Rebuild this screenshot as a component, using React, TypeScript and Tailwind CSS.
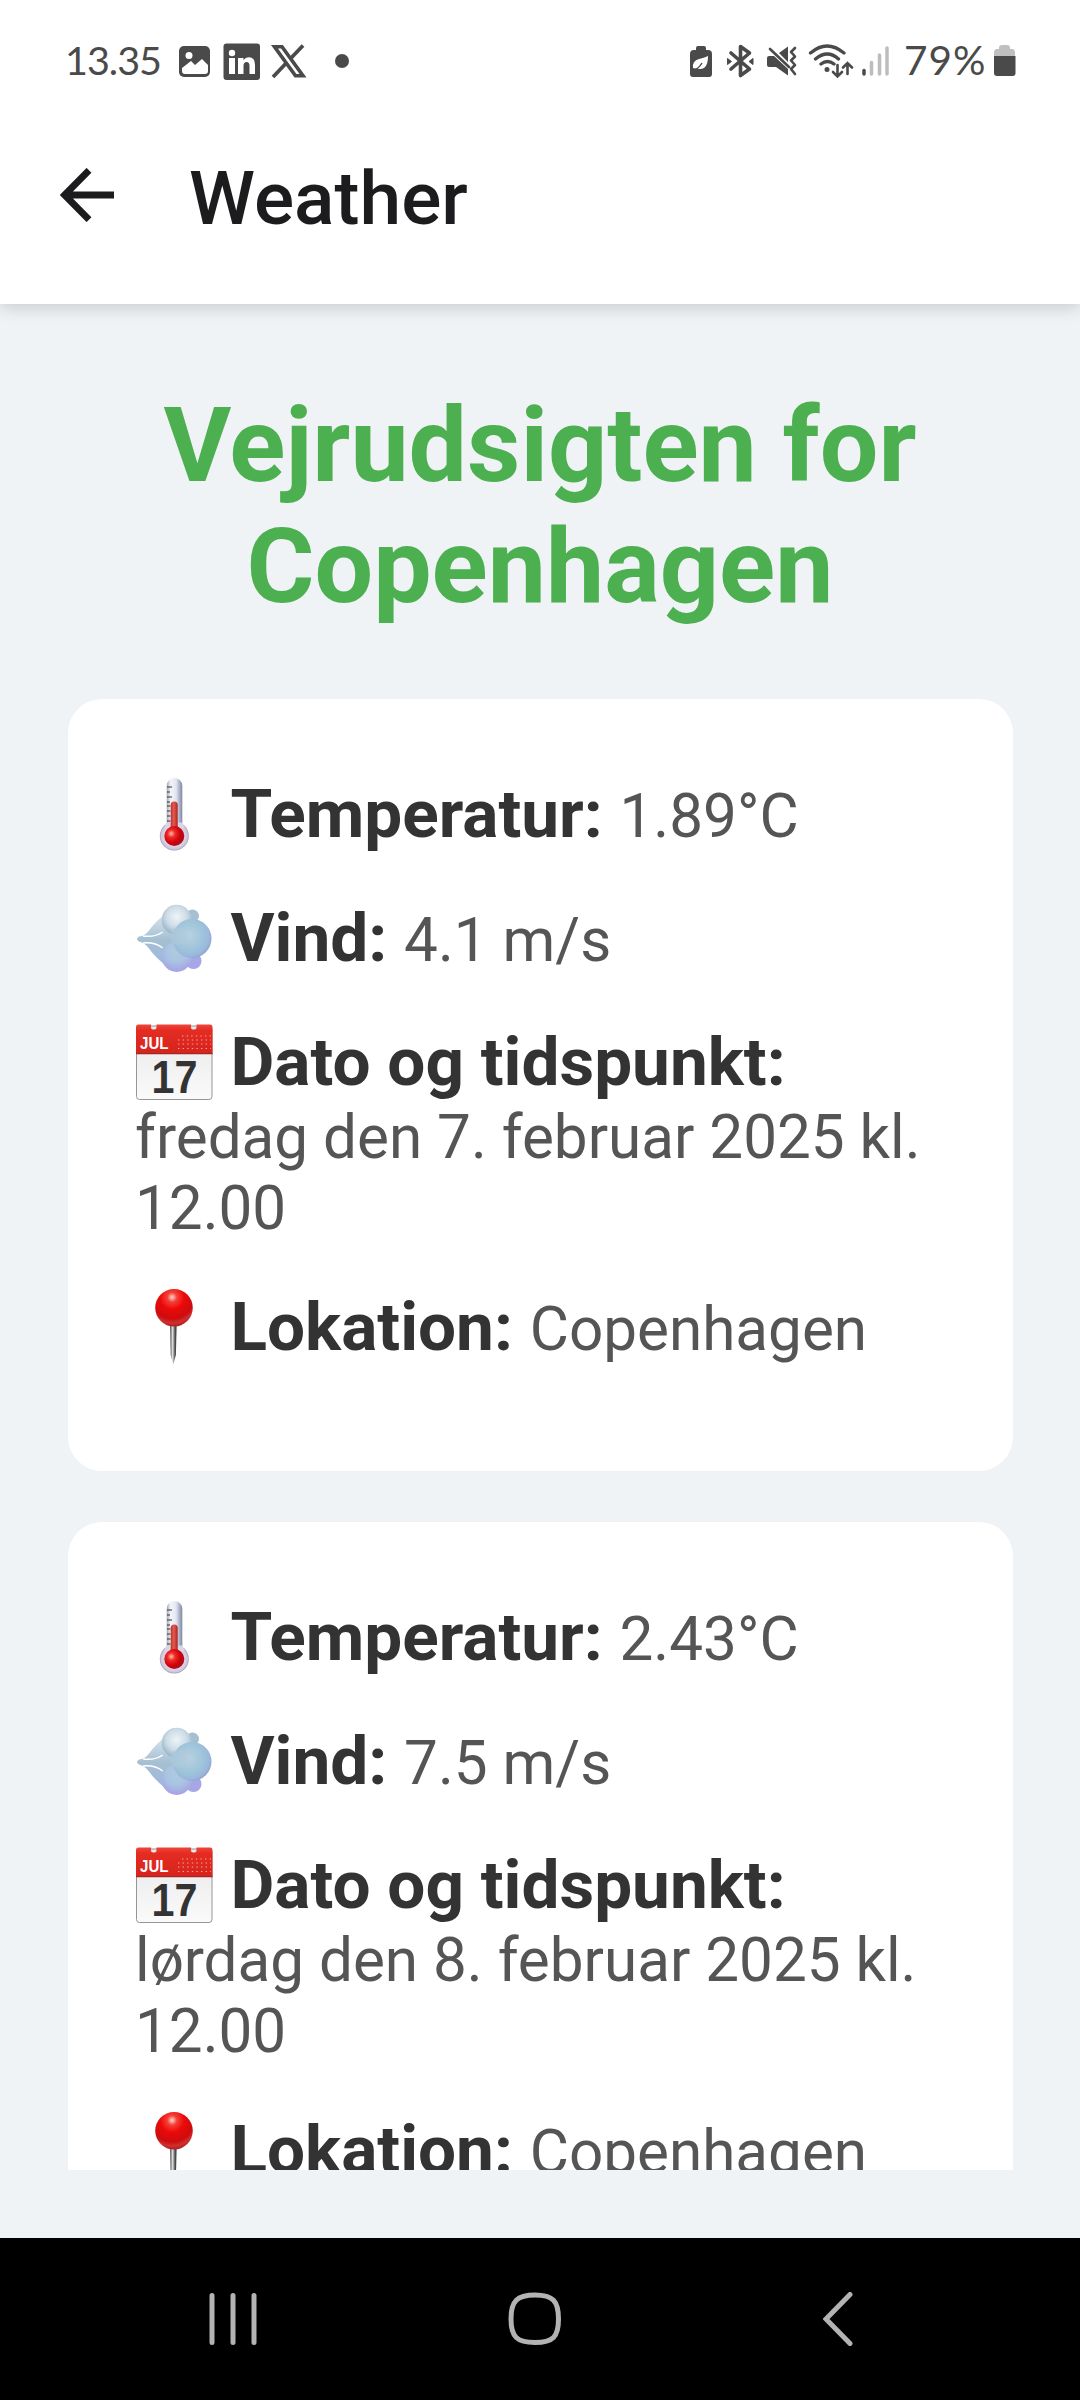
import React from 'react';

function Thermometer() {
  return (
    <svg viewBox="0 0 78 78" className="mt-[2px] block h-[78px] w-[78px]">
      <defs>
        <linearGradient id="tg" x1="0" x2="1"><stop offset="0" stopColor="#a3a4b2" /><stop offset=".25" stopColor="#f4f5fb" /><stop offset=".6" stopColor="#e3e6f2" /><stop offset="1" stopColor="#7f86a2" /></linearGradient>
        <radialGradient id="tb" cx=".5" cy=".5" r=".5"><stop offset=".7" stopColor="#dcd3e6" /><stop offset=".9" stopColor="#cfc6da" /><stop offset="1" stopColor="#9f9bb0" /></radialGradient>
        <radialGradient id="tr" cx=".35" cy=".38" r=".65"><stop offset="0" stopColor="#ffb9ae" /><stop offset=".3" stopColor="#ee2a25" /><stop offset=".7" stopColor="#cf0009" /><stop offset="1" stopColor="#a80f1c" /></radialGradient>
        <linearGradient id="ts" x1="0" x2="1"><stop offset="0" stopColor="#b8332f" /><stop offset=".45" stopColor="#e65a50" /><stop offset="1" stopColor="#a82422" /></linearGradient>
      </defs>
      <circle cx="39.3" cy="60" r="14.500" fill="url(#tb)" />
      <path d="M31.700 51V9.800a7.800 7.800 0 0 1 15.600 0V51z" fill="url(#tg)" />
      <path d="M31.700 46.500h15.600l2.700 6H29z" fill="#dcd5e7" />
      <path d="M35.700 56V29a3.500 3.500 0 0 1 7 0v27z" fill="url(#ts)" />
      <circle cx="39.300" cy="60" r="10" fill="url(#tr)" />
      <path d="M32 11h5M32 16h3M32 21h5M32 26h3M32 30h3.500M32 35h3.500M32 40h3.500M32 45h3.500" stroke="#333" strokeWidth="1" />
    </svg>
  );
}

function Wind() {
  return (
    <svg viewBox="0 0 78 78" className="mt-[2px] block h-[78px] w-[78px]">
      <defs>
        <linearGradient id="wt" x1="0" x2="0" y1="0" y2="1"><stop offset="0" stopColor="#d7e3ec" /><stop offset=".5" stopColor="#a5c0d2" /><stop offset="1" stopColor="#9fb8de" /></linearGradient>
        <radialGradient id="w1" cx=".5" cy=".4" r=".62"><stop offset="0" stopColor="#eef4f7" /><stop offset=".55" stopColor="#cddce6" /><stop offset="1" stopColor="#8fafc7" /></radialGradient>
        <radialGradient id="w2" cx=".42" cy=".42" r=".62"><stop offset="0" stopColor="#b9d1e0" /><stop offset=".65" stopColor="#9cc3da" /><stop offset=".85" stopColor="#9db6de" /><stop offset="1" stopColor="#86a6c6" /></radialGradient>
        <radialGradient id="w3" cx=".5" cy=".3" r=".72"><stop offset="0" stopColor="#aecbdd" /><stop offset=".5" stopColor="#a9c4e2" /><stop offset="1" stopColor="#a59fe4" /></radialGradient>
      </defs>
      <g transform="translate(0 1)">
        <path d="M4 35.500Q10 35 14 29.500Q20 21 29 14L48 34 46 48 29 63Q20 56 14 47.500Q10 42 4 40.500Q0 38 4 35.500z" fill="url(#wt)" />
        <path d="M8 35Q20 36.500 27.700 31M8 42Q20 41 27.700 47" fill="none" stroke="#fff" strokeWidth="1.500" />
        <circle cx="57.500" cy="15" r="6.500" fill="#a6c0d2" /><circle cx="58.500" cy="60" r="8" fill="#a6a6e8" />
        <circle cx="41.700" cy="56" r="15" fill="url(#w3)" />
        <circle cx="41.700" cy="18.800" r="15" fill="url(#w1)" />
        <circle cx="57" cy="37.500" r="19.500" fill="url(#w2)" />
        <ellipse cx="44" cy="35" rx="9" ry="9" fill="#b1cbdb" opacity=".55" />
      </g>
    </svg>
  );
}

function Calendar() {
  return (
    <svg viewBox="0 0 78 78" className="mt-[2px] block h-[78px] w-[78px]">
      <defs>
        <linearGradient id="cp" x1="0" x2="0" y1="0" y2="1"><stop offset="0" stopColor="#e7e8e7" /><stop offset="1" stopColor="#fafafa" /></linearGradient>
        <linearGradient id="cr" x1="0" x2="0" y1="0" y2="1"><stop offset="0" stopColor="#f0453a" /><stop offset=".2" stopColor="#e42c22" /><stop offset="1" stopColor="#d6231c" /></linearGradient>
      </defs>
      <rect x="1.500" y="2" width="75.500" height="73.500" rx="3" fill="url(#cp)" stroke="#969696" />
      <path d="M1 30V3q0-2.500 2.500-2.500H16V3.500q0 2 2 2h1.500q2 0 2-2V.5H56V3.500q0 2 2 2h1.500q2 0 2-2V.5H75q2.500 0 2.500 2.500v27z" fill="url(#cr)" />
      <path d="M1 29.700h76.500" stroke="#a02a23" strokeWidth="1.200" />
      <path d="M47 12h29M43 16h33M43 20h33M43 24.500h33" stroke="#f7a49b" strokeWidth="1" strokeDasharray="1.400 3.200" />
      <text x="5" y="25" className="font-['Liberation_Sans',sans-serif] text-[16.500px] font-bold" textLength="28.500" lengthAdjust="spacingAndGlyphs" fill="#fff">JUL</text>
      <text x="16.500" y="68.500" className="font-['Liberation_Sans',sans-serif] text-[45.500px] font-bold" textLength="46" lengthAdjust="spacingAndGlyphs" fill="#333">17</text>
    </svg>
  );
}

function Pin() {
  return (
    <svg viewBox="0 0 78 78" className="mt-[2px] block h-[78px] w-[78px]">
      <defs>
        <linearGradient id="pn" x1="0" x2="1"><stop offset="0" stopColor="#444" /><stop offset=".4" stopColor="#e6e2df" /><stop offset=".65" stopColor="#777" /><stop offset="1" stopColor="#222" /></linearGradient>
        <radialGradient id="pr" cx=".45" cy=".22" r=".8"><stop offset="0" stopColor="#ffd9d3" /><stop offset=".16" stopColor="#f54038" /><stop offset=".4" stopColor="#ec0909" /><stop offset=".72" stopColor="#cc0c0e" /><stop offset=".85" stopColor="#cf3030" /><stop offset="1" stopColor="#a81c1c" /></radialGradient>
      </defs>
      <path d="M35 35h6.600l-.7 31-2.700 9.500-2.500-9.500z" fill="url(#pn)" />
      <circle cx="39" cy="18.800" r="18.800" fill="url(#pr)" />
    </svg>
  );
}

function Row({ icon, label, value }: { icon: React.ReactNode; label: string; value?: string }) {
  return (
    <div className="flex h-[79px] items-baseline whitespace-pre leading-[79px]">
      <span className="w-[95.500px] shrink-0 self-start">{icon}</span>
      <span className="text-[67.500px] font-bold text-[#333]">{label} </span>
      {value && <span className="text-[60.200px] text-[#555]">{value}</span>}
    </div>
  );
}

function Card({ temp, wind, date }: { temp: string; wind: string; date: string }) {
  return (
    <section className="flex h-[772px] shrink-0 flex-col gap-[45px] rounded-[34px] bg-white px-[67.500px] pt-[75px]">
      <Row icon={<Thermometer />} label="Temperatur:" value={temp} />
      <Row icon={<Wind />} label="Vind:" value={wind} />
      <div>
        <Row icon={<Calendar />} label="Dato og tidspunkt:" />
        <p className="-mb-[2px] mt-px whitespace-pre-line text-[60.200px] leading-[71px] text-[#555]">{date}</p>
      </div>
      <Row icon={<Pin />} label="Lokation:" value="Copenhagen" />
    </section>
  );
}

function StatusIcons() {
  return (
    <svg viewBox="0 -5 225 50" className="h-[50px] w-[225px]" fill="#4a4a4a">
      <path d="M6 3q0-2 2-2h6q2 0 2 2v2h2q4 0 4 4v20q0 3-3 3H3q-3 0-3-3V9q0-4 4-4h2z" />
      <path d="M3 23q-1-7 6-9 5-1 9-3 0 13-8 13-4 0-7-1z" fill="#fff" /><path d="M2 25q6 0 10-7" stroke="#4a4a4a" strokeWidth="1.500" fill="none" />
      <path d="M41 8l18.500 16-9 6.500V1.500L59.500 8 41 24" fill="none" stroke="#4a4a4a" strokeWidth="3.600" strokeLinecap="round" strokeLinejoin="round" />
      <path d="M37.500 13.500l4 3-4 3zM63 13.500l-4 3 4 3z" stroke="#4a4a4a" strokeLinejoin="round" />
      <path d="M79 11h5l14 13v6.500L86 22h-7q-2 0-2-2v-7q0-2 2-2zM89 8l9-6.500V17z" />
      <path d="M80 4l19 18" stroke="#4a4a4a" strokeWidth="2.600" strokeLinecap="round" />
      <path d="M105 3l-4 4 4 4.500-4 4 4 4.500-4 4 4 5" fill="none" stroke="#4a4a4a" strokeWidth="2.600" strokeLinecap="round" strokeLinejoin="round" />
      <path d="M120.500 8Q137-6 154 8M125.500 14q12-10 23 0M131 19q6.500-5 13 0" fill="none" stroke="#4a4a4a" strokeWidth="3.300" strokeLinecap="round" />
      <circle cx="137" cy="24.500" r="2.500" />
      <path d="M147.500 20v11m-4.500-4 4.500 4.500 4.500-4.500M157.500 29V18m-4.500 4.500L157.500 18l4.500 4.500" fill="none" stroke="#4a4a4a" strokeWidth="2.600" strokeLinecap="round" />
      <path d="M174 25.500v3.500" stroke="#4a4a4a" strokeWidth="3.500" strokeLinecap="round" />
      <path d="M181.500 17.500V29M189.500 10v19M197 3v26" stroke="#bdbdbd" strokeWidth="3.500" strokeLinecap="round" />
    </svg>
  );
}

export default function App() {
  return (
    <main className="flex h-[2400px] w-[1080px] flex-col overflow-hidden bg-[#eff3f6] font-[Roboto,sans-serif]">
      <header className="relative z-10 h-[304px] shrink-0 bg-white shadow-[0_4px_16px_rgba(0,0,0,0.160)]">
        <div className="flex h-[122px] items-center text-[#4a4a4a]">
          <span className="-mt-[2px] ml-[65px] w-[114px] whitespace-nowrap font-[Lato,sans-serif] text-[39.500px] leading-[50px] tracking-[-1px]">13.35</span>
          <svg viewBox="0 0 180 50" className="h-[50px] w-[180px]" fill="#4a4a4a">
            <rect y="10" width="31" height="31" rx="5" /><circle cx="10" cy="19.500" r="3.500" fill="#fff" /><path d="M3 32l9-7 4 4 7-6 6 6v6q0 3-3 3H6q-3 0-3-3z" fill="#fff" />
            <rect x="44.500" y="7.500" width="36.500" height="36.500" rx="3" />
            <circle cx="53" cy="17" r="3.200" fill="#fff" /><path d="M50 22h6v16h-6zM59 22h5.500v2.300q2-3 5.500-3 6 0 6 7.500V38h-5.500v-8q0-4-2.800-4-3.200 0-3.200 4v8H59z" fill="#fff" />
            <path d="M124 9.500L94 41" stroke="#4a4a4a" strokeWidth="3.800" fill="none" /><path d="M95.500 10.700h7.500l21 29h-7.500z" fill="#fff" stroke="#4a4a4a" strokeWidth="3.600" />
            <circle cx="163" cy="25" r="7" />
          </svg>
          <div className="ml-[331px] mt-[7px]"><StatusIcons /></div>
          <span className="-ml-[11px] -mt-[2px] w-[86px] whitespace-nowrap font-[Lato,sans-serif] text-[40.500px] leading-[50px] tracking-[1px]">79%</span>
          <svg viewBox="0 0 22 32" className="ml-[4px] h-[32px] w-[22px]"><path d="M5 3q0-3 3-3h5q3 0 3 3v1h2q3 0 3 4v3H0V8q0-4 3-4h2z" fill="#c0c0c0" /><path d="M0 11h21.500v17q0 3-3 3H3q-3 0-3-3z" fill="#4a4a4a" /></svg>
        </div>
        <div className="flex h-[150px] items-center">
          <svg viewBox="0 0 54 54" className="mb-[4px] ml-[60px] h-[54px] w-[54px]" fill="none" stroke="#1c1c1e" strokeWidth="6.800"><path d="M29 2.300L4.600 27 29 51.700M4 27h50" /></svg>
          <h1 className="ml-[75px] mt-[3px] text-[75px] font-medium leading-[87px] text-[#1c1c1e]">Weather</h1>
        </div>
      </header>
      <div className="flex h-[1866px] shrink-0 flex-col overflow-hidden px-[67.500px] pt-[81px]">
        <h2 className="h-[314px] shrink-0 whitespace-pre-line text-center text-[103.900px] font-bold leading-[121px] text-[#4caf50]">{'Vejrudsigten for\nCopenhagen'}</h2>
        <div className="flex flex-col gap-[51px]">
          <Card temp="1.89°C" wind="4.1 m/s" date={'fredag den 7. februar 2025 kl.\n12.00'} />
          <Card temp="2.43°C" wind="7.5 m/s" date={'lørdag den 8. februar 2025 kl.\n12.00'} />
        </div>
      </div>
      <nav className="mt-auto flex h-[162px] shrink-0 items-start bg-black pt-[54px]">
        <svg viewBox="0 0 48 54" className="ml-[209px] h-[54px] w-[48px]" stroke="#b3b3b3" strokeWidth="5" strokeLinecap="round"><path d="M3 3.500v47M24 3.500v47M45 3.500v47" /></svg>
        <svg viewBox="0 0 54 54" className="ml-[251px] h-[54px] w-[54px]" fill="none" stroke="#b3b3b3" strokeWidth="5"><path d="M27 3C45 3 50.500 9 50.500 27S45 50.500 27 50.500 3 45 3 27 9 3 27 3z" /></svg>
        <svg viewBox="0 0 30 54" className="ml-[261px] h-[54px] w-[30px]" fill="none" stroke="#b3b3b3" strokeWidth="5" strokeLinecap="round"><path d="M27 2.500L3 27l24 24.500" /></svg>
      </nav>
    </main>
  );
}
